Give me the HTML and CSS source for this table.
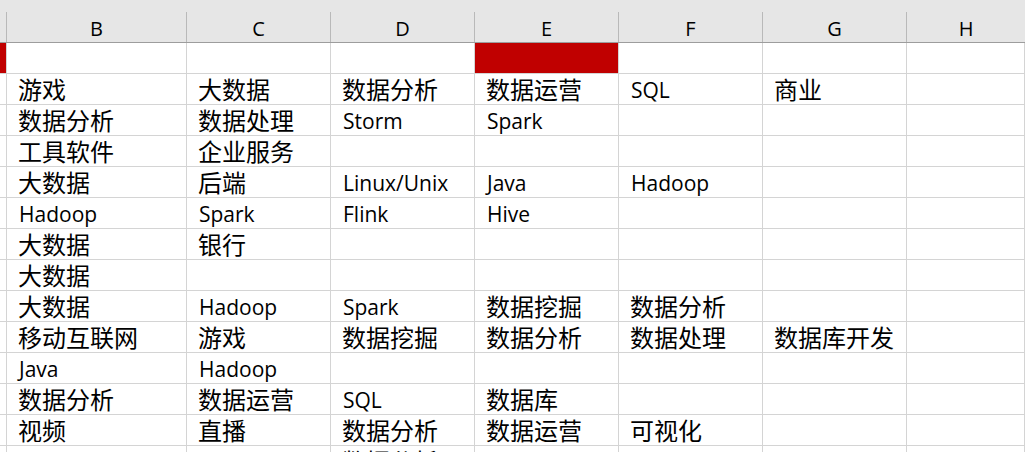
FILE: index.html
```html
<!DOCTYPE html>
<html lang="zh-CN">
<head>
<meta charset="utf-8">
<title>Sheet</title>
<link rel="stylesheet" href="styles.css">
</head>
<body>
<div class="sheet">
  <div class="head">
    <div class="hc corner"></div>
    <div class="hc">B</div>
    <div class="hc">C</div>
    <div class="hc">D</div>
    <div class="hc">E</div>
    <div class="hc">F</div>
    <div class="hc">G</div>
    <div class="hc last">H</div>
  </div>
  <div class="grid">
    <div class="c rh red"></div><div class="c"></div><div class="c"></div><div class="c"></div><div class="c red"></div><div class="c"></div><div class="c"></div><div class="c"></div>
    <div class="c rh"></div><div class="c">游戏</div><div class="c">大数据</div><div class="c">数据分析</div><div class="c">数据运营</div><div class="c en">SQL</div><div class="c">商业</div><div class="c"></div>
    <div class="c rh"></div><div class="c">数据分析</div><div class="c">数据处理</div><div class="c en">Storm</div><div class="c en">Spark</div><div class="c"></div><div class="c"></div><div class="c"></div>
    <div class="c rh"></div><div class="c">工具软件</div><div class="c">企业服务</div><div class="c"></div><div class="c"></div><div class="c"></div><div class="c"></div><div class="c"></div>
    <div class="c rh"></div><div class="c">大数据</div><div class="c">后端</div><div class="c en">Linux/Unix</div><div class="c en">Java</div><div class="c en">Hadoop</div><div class="c"></div><div class="c"></div>
    <div class="c rh"></div><div class="c en">Hadoop</div><div class="c en">Spark</div><div class="c en">Flink</div><div class="c en">Hive</div><div class="c"></div><div class="c"></div><div class="c"></div>
    <div class="c rh"></div><div class="c">大数据</div><div class="c">银行</div><div class="c"></div><div class="c"></div><div class="c"></div><div class="c"></div><div class="c"></div>
    <div class="c rh"></div><div class="c">大数据</div><div class="c"></div><div class="c"></div><div class="c"></div><div class="c"></div><div class="c"></div><div class="c"></div>
    <div class="c rh"></div><div class="c">大数据</div><div class="c en">Hadoop</div><div class="c en">Spark</div><div class="c">数据挖掘</div><div class="c">数据分析</div><div class="c"></div><div class="c"></div>
    <div class="c rh"></div><div class="c">移动互联网</div><div class="c">游戏</div><div class="c">数据挖掘</div><div class="c">数据分析</div><div class="c">数据处理</div><div class="c">数据库开发</div><div class="c"></div>
    <div class="c rh"></div><div class="c en">Java</div><div class="c en">Hadoop</div><div class="c"></div><div class="c"></div><div class="c"></div><div class="c"></div><div class="c"></div>
    <div class="c rh"></div><div class="c">数据分析</div><div class="c">数据运营</div><div class="c en">SQL</div><div class="c">数据库</div><div class="c"></div><div class="c"></div><div class="c"></div>
    <div class="c rh"></div><div class="c">视频</div><div class="c">直播</div><div class="c">数据分析</div><div class="c">数据运营</div><div class="c">可视化</div><div class="c"></div><div class="c"></div>
    <div class="c rh"></div><div class="c"></div><div class="c"></div><div class="c">数据分析</div><div class="c"></div><div class="c"></div><div class="c"></div><div class="c"></div>
  </div>
</div>
</body>
</html>
```

FILE: styles.css
```css
html, body {
  margin: 0;
  padding: 0;
  background: #ffffff;
  overflow: hidden;
}

.sheet {
  width: 1025px;
  height: 452px;
  overflow: hidden;
  font-family: "Noto Sans CJK SC", "Noto Sans", sans-serif;
  color: #000;
}

.head {
  display: grid;
  grid-template-columns: 7px 180px 144px 144px 144px 144px 144px 1fr;
  height: 42px;
  background: #e6e6e6;
  border-bottom: 1px solid #9d9d9d;
}

.hc {
  margin-top: 12px;
  height: 30px;
  border-right: 1px solid #b9b9b9;
  text-align: center;
  font-family: "Open Sans", "Noto Sans", sans-serif;
  font-size: 20px;
  line-height: 34px;
}

.hc.last {
  border-right: none;
}

.grid {
  display: grid;
  grid-template-columns: 7px 180px 144px 144px 144px 144px 144px 1fr;
  grid-auto-rows: 31px;
}

.c {
  border-right: 1px solid #d4d4d4;
  border-bottom: 1px solid #d4d4d4;
  font-size: 24px;
  line-height: 30px;
  padding-left: 11px;
  white-space: nowrap;
}

.c.en {
  font-family: "Open Sans", "Noto Sans", sans-serif;
  font-size: 21px;
  padding-left: 12px;
  padding-top: 2px;
  line-height: 28px;
}

.c.rh {
  padding-left: 0;
}

.c.red {
  background: #c00000;
}
```
